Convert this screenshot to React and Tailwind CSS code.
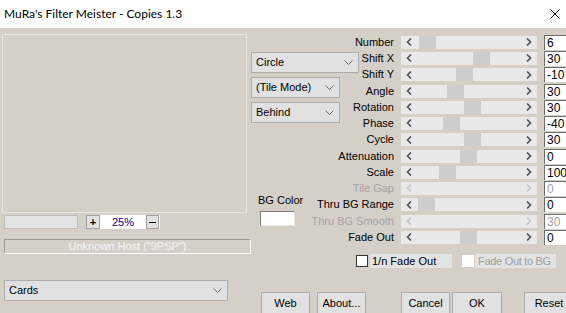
import React from "react";

const rows = [
  { label: "Number", value: "6", thumb: 419 },
  { label: "Shift X", value: "30", thumb: 473 },
  { label: "Shift Y", value: "-10", thumb: 456 },
  { label: "Angle", value: "30", thumb: 447 },
  { label: "Rotation", value: "30", thumb: 464 },
  { label: "Phase", value: "-40", thumb: 443 },
  { label: "Cycle", value: "30", thumb: 464 },
  { label: "Attenuation", value: "0", thumb: 460 },
  { label: "Scale", value: "100", thumb: 439 },
  { label: "Tile Gap", value: "0", thumb: null, disabled: true },
  { label: "Thru BG Range", value: "0", thumb: 418 },
  { label: "Thru BG Smooth", value: "30", thumb: null, disabled: true },
  { label: "Fade Out", value: "0", thumb: 460 },
];

const Chevron = () => (
  <svg width="9" height="5" viewBox="0 0 9 5" className="shrink-0">
    <polyline points="0.5,0.5 4.5,4.5 8.5,0.5" fill="none" stroke="#6d6d6d" strokeWidth="1" />
  </svg>
);

const Arrow = ({ dir, color }) => (
  <svg width="6" height="8" viewBox="0 0 6 8">
    {dir === "l" ? (
      <polyline points="5,0.5 1.5,4 5,7.5" fill="none" stroke={color} strokeWidth="1.6" />
    ) : (
      <polyline points="1,0.5 4.5,4 1,7.5" fill="none" stroke={color} strokeWidth="1.6" />
    )}
  </svg>
);

const Select = ({ text, w }) => (
  <div
    className={`flex h-[21px] items-center justify-between border border-[#adadad] bg-[#e1e1e1] pl-[4px] pr-[5px] text-[11px] text-black ${w}`}
  >
    <span>{text}</span>
    <Chevron />
  </div>
);

const Button = ({ children, w }) => (
  <div
    className={`flex h-[23px] shrink-0 items-center justify-center border border-[#adadad] bg-[#e1e1e1] text-[11px] text-black ${w}`}
  >
    {children}
  </div>
);

export default function App() {
  return (
    <div
      className="h-[313px] w-[566px] overflow-hidden bg-[#d4d0c8]"
      style={{ fontFamily: '"Liberation Sans", Arial, sans-serif' }}
    >
      {/* title bar */}
      <div className="flex h-[28px] items-center justify-between bg-white pl-[4px] pr-[6px]">
        <span
          className="text-[12px] text-black"
          style={{ fontFamily: 'Lato, "Noto Sans", sans-serif' }}
        >
          MuRa's Filter Meister - Copies 1.3
        </span>
        <svg width="10" height="10" viewBox="0 0 10 10">
          <path d="M0.5 0.5 L9.5 9.5 M9.5 0.5 L0.5 9.5" stroke="#111" strokeWidth="1" />
        </svg>
      </div>

      <div className="flex">
        {/* left column */}
        <div className="flex w-[251px] shrink-0 flex-col">
          <div className="ml-[2px] mt-[6px] h-[179px] w-[245px] border border-[#e8e5e0]" />
          <div className="ml-[4px] mt-[2px] flex h-[14px] items-center">
            <div className="h-[14px] w-[74px] border border-[#bdbdbd] bg-[#e3e3e3]" />
            <div className="ml-[8px] flex h-[14px] w-[74px] items-center bg-white">
              <div className="flex h-[14px] w-[14px] items-center justify-center border border-[#a0a0a0] bg-[#e1e1e1] text-[11px] font-bold leading-none text-black">
                +
              </div>
              <div className="flex-1 text-center text-[11px] leading-none text-[#000080]">25%</div>
              <div className="mr-[1px] flex h-[14px] w-[13px] items-center justify-center border border-[#a0a0a0] bg-[#e1e1e1]">
                <div className="h-[1px] w-[7px] bg-black" />
              </div>
            </div>
          </div>
          <div className="ml-[4px] mt-[10px] flex h-[15px] w-[247px] items-center justify-center border-b border-l border-r border-t border-b-white border-l-[#9a9792] border-r-white border-t-[#9a9792] text-[11px] text-[#f4f4f4]">
            Unknown Host ("9PSP")
          </div>
          <div className="ml-[4px] mt-[26px]">
            <Select text="Cards" w="w-[224px]" />
          </div>
        </div>

        {/* right block */}
        <div className="flex w-[315px] shrink-0 flex-col">
          <div className="mt-[6px] grid grid-cols-[143px_7px_136px_7px_22px] grid-rows-[16px_16px_17px_16px_16px_16px_17px_16px_16px_16px_17px_16px_16px]">
            {rows.map((r, i) => (
              <React.Fragment key={r.label}>
                <div
                  className={`col-start-1 flex items-center justify-end whitespace-nowrap text-[11px] ${
                    r.disabled ? "text-[#a3a3a3]" : "text-black"
                  }`}
                  style={{ gridRowStart: i + 1 }}
                >
                  {r.label}
                </div>
                <div className="col-start-3 flex items-center" style={{ gridRowStart: i + 1 }}>
                  <div className="relative flex h-[13px] w-full items-center justify-between bg-[#e9e9e9] px-[5px]">
                    <Arrow dir="l" color={r.disabled ? "#c4c4c4" : "#505050"} />
                    <Arrow dir="r" color={r.disabled ? "#c4c4c4" : "#505050"} />
                    {r.thumb !== null && (
                      <div
                        className="absolute top-0 h-[13px] w-[17px] bg-[#cdcdcd]"
                        style={{ left: r.thumb - 401 }}
                      />
                    )}
                  </div>
                </div>
                <div className="col-start-5 flex items-center" style={{ gridRowStart: i + 1 }}>
                  <div
                    className={`flex h-[15px] w-full items-center border-l border-t border-[#6e6e6e] bg-white pl-[2px] text-[12px] leading-none ${
                      r.disabled ? "text-[#a3a3a3]" : "text-black"
                    }`}
                  >
                    {r.value}
                  </div>
                </div>
              </React.Fragment>
            ))}
            {/* dropdown stack */}
            <div className="col-start-1 row-start-2 row-span-5 flex flex-col gap-[4px] self-start justify-self-start pt-[2px]">
              <Select text="Circle" w="w-[108px]" />
              <Select text="(Tile Mode)" w="w-[89px]" />
              <Select text="Behind" w="w-[89px]" />
            </div>
            {/* BG color */}
            <div className="col-start-1 row-start-10 row-span-3 ml-[7px] mt-[15px] flex flex-col items-start self-start justify-self-start">
              <span className="text-[11px] leading-none text-black">BG Color</span>
              <div className="ml-[2px] mt-[5px] h-[15px] w-[35px] border border-b-[#e6e6e6] border-l-[#7a7a7a] border-r-[#e6e6e6] border-t-[#7a7a7a] bg-white" />
            </div>
          </div>

          {/* checkboxes */}
          <div className="ml-[105px] mt-[9px] flex h-[14px] items-center whitespace-nowrap">
            <div className="h-[12px] w-[12px] border border-[#333] bg-white" />
            <div className="ml-[2px] flex h-[14px] w-[82px] items-center bg-[#e3e3e3] pl-[2px] text-[11px] text-black">
              1/n Fade Out
            </div>
            <div className="ml-[10px] h-[12px] w-[12px] bg-white" />
            <div className="ml-[1px] flex h-[14px] w-[81px] items-center bg-[#e3e3e3] pl-[3px] text-[11px] tracking-[-0.3px] text-[#9e9e9e]">
              Fade Out to BG
            </div>
          </div>

          {/* buttons */}
          <div className="ml-[10px] mt-[24px] flex">
            <Button w="w-[49px]">Web</Button>
            <div className="ml-[7px]">
              <Button w="w-[49px]">About...</Button>
            </div>
            <div className="ml-[35px]">
              <Button w="w-[49px]">Cancel</Button>
            </div>
            <div className="ml-[2px]">
              <Button w="w-[50px]">OK</Button>
            </div>
            <div className="ml-[22px]">
              <Button w="w-[50px]">Reset</Button>
            </div>
          </div>
        </div>
      </div>
    </div>
  );
}
